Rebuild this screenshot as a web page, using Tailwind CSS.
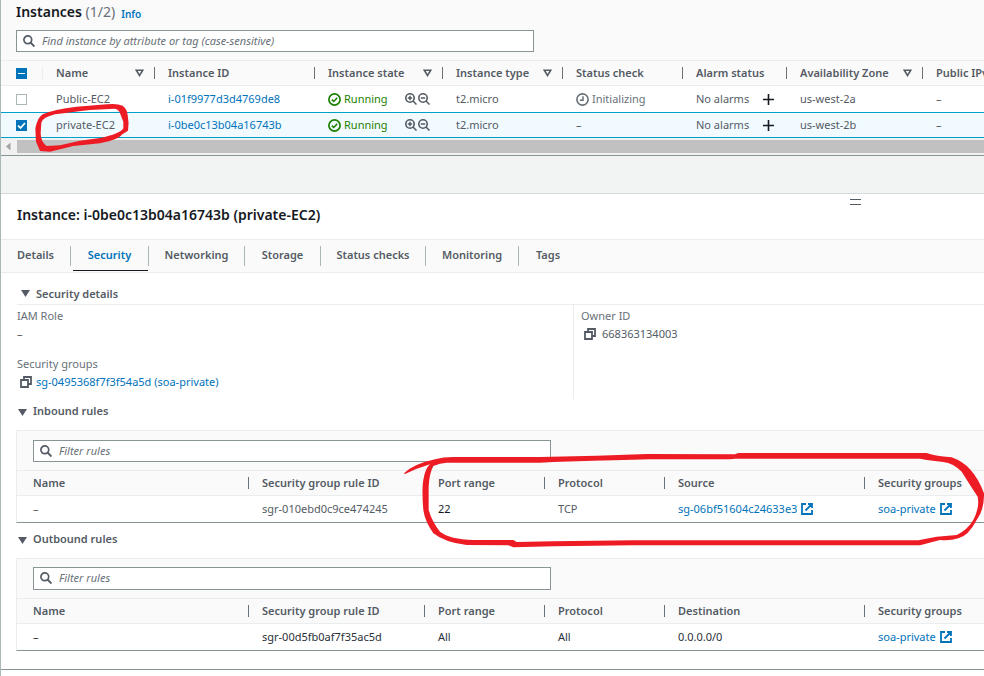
<!DOCTYPE html>
<html lang="en">
<head>
<meta charset="utf-8">
<title>Instances | EC2</title>
<script src="https://cdn.jsdelivr.net/npm/@tailwindcss/browser@4"></script>
</head>
<body class="bg-white font-['Noto_Sans',sans-serif] text-[11px] leading-4 text-[#545b64]">
<svg class="hidden" aria-hidden="true">
  <symbol id="search" viewBox="0 0 12 12"><circle cx="4.8" cy="4.8" r="3.9" fill="none" stroke="currentColor" stroke-width="1.7"/><path d="M7.5 7.5 11.5 11.5" stroke="currentColor" stroke-width="1.9"/></symbol>
  <symbol id="sort" viewBox="0 0 9 8"><path d="M1.2 1.2h6.6L4.5 6.4z" fill="none" stroke="currentColor" stroke-width="1.6"/></symbol>
  <symbol id="caret" viewBox="0 0 9 7"><path d="M0 0h9L4.5 7z" fill="currentColor"/></symbol>
  <symbol id="ok" viewBox="0 0 13 13"><circle cx="6.5" cy="6.5" r="5.6" fill="none" stroke="currentColor" stroke-width="1.7"/><path d="M3.8 6.7 5.8 8.5 9.2 4.8" fill="none" stroke="currentColor" stroke-width="1.6"/></symbol>
  <symbol id="clock" viewBox="0 0 13 13"><circle cx="6.5" cy="6.5" r="5.6" fill="none" stroke="currentColor" stroke-width="1.6"/><path d="M7 3.2V7.2H3.8" fill="none" stroke="currentColor" stroke-width="1.5"/></symbol>
  <symbol id="zoomin" viewBox="0 0 12 12"><circle cx="5" cy="5" r="4.2" fill="none" stroke="currentColor" stroke-width="1.6"/><path d="M8 8 11.5 11.5M2.8 5h4.4M5 2.8v4.4" fill="none" stroke="currentColor" stroke-width="1.5"/></symbol>
  <symbol id="zoomout" viewBox="0 0 12 12"><circle cx="5" cy="5" r="4.2" fill="none" stroke="currentColor" stroke-width="1.6"/><path d="M8 8 11.5 11.5M2.8 5h4.4" fill="none" stroke="currentColor" stroke-width="1.5"/></symbol>
  <symbol id="plus" viewBox="0 0 11 11"><path d="M5.5 0v11M0 5.5h11" stroke="currentColor" stroke-width="1.6"/></symbol>
  <symbol id="copy" viewBox="0 0 12 12"><path d="M1 4h7v7H1zM4 3.5V1h7v7H8.5" fill="none" stroke="currentColor" stroke-width="1.8"/></symbol>
  <symbol id="ext" viewBox="0 0 12 12"><path d="M5 1H1v10h10V7M7 1h4v4M11 1 4.5 7.5" fill="none" stroke="currentColor" stroke-width="1.8"/></symbol>
</svg>

<div class="relative min-h-screen overflow-hidden border-l border-[#aab7b8]">
  <section>
    <div class="bg-[#fafafa] px-[15px] pt-1 pb-2">
      <div class="flex h-[26px] items-start gap-[6px]">
        <h1 class="text-[14px] font-semibold text-[#16191f]">Instances <span class="font-normal text-[#687078]">(1/2)</span></h1>
        <a href="#" class="pt-[2px] text-[10px] font-semibold text-[#0073bb]">Info</a>
      </div>
      <label class="flex h-[22px] max-w-[518px] items-center gap-[7px] border border-[#879596] bg-white px-[6px]">
        <svg class="size-3 shrink-0"><use href="#search"/></svg>
        <input type="text" aria-label="Find instance" placeholder="Find instance by attribute or tag (case-sensitive)" class="w-full italic outline-none placeholder:text-[#687078]">
      </label>
    </div>
    <table class="w-full table-fixed border-t border-[#eaeded] text-left whitespace-nowrap">
      <colgroup><col class="w-[41px]"><col class="w-[113px]"><col class="w-[160px]"><col class="w-[128px]"><col class="w-[120px]"><col class="w-[120px]"><col class="w-[104px]"><col class="w-[136px]"><col></colgroup>
      <thead class="bg-[#fafafa] [&_th]:font-semibold">
        <tr class="h-[25px] border-b border-[#eaeded]">
          <th class="pl-[15px]"><span class="relative block size-[11px]"><input type="checkbox" aria-label="Select all instances" class="block size-[11px] appearance-none bg-[#0073bb]"><span class="pointer-events-none absolute top-[5px] left-[2px] h-px w-[7px] bg-white"></span></span></th>
          <th><div class="flex h-3 items-center justify-between border-x border-l-[#eaeded] border-r-[#687078] pr-[10px] pl-[13px]">Name<svg class="h-2 w-[9px]"><use href="#sort"/></svg></div></th>
          <th><div class="flex h-3 items-center border-r border-[#687078] pl-[13px]">Instance ID</div></th>
          <th><div class="flex h-3 items-center justify-between border-r border-[#687078] pr-[10px] pl-[13px]">Instance state<svg class="h-2 w-[9px]"><use href="#sort"/></svg></div></th>
          <th><div class="flex h-3 items-center justify-between border-r border-[#687078] pr-[10px] pl-[13px]">Instance type<svg class="h-2 w-[9px]"><use href="#sort"/></svg></div></th>
          <th><div class="flex h-3 items-center border-r border-[#687078] pl-[13px]">Status check</div></th>
          <th><div class="flex h-3 items-center border-r border-[#687078] pl-[13px]">Alarm status</div></th>
          <th><div class="flex h-3 items-center justify-between border-r border-[#687078] pr-[10px] pl-[13px]">Availability Zone<svg class="h-2 w-[9px]"><use href="#sort"/></svg></div></th>
          <th class="overflow-hidden pl-[13px]">Public IPv4</th>
        </tr>
      </thead>
      <tbody>
        <tr class="h-[27px]">
          <td class="pl-[15px]"><input type="checkbox" aria-label="Select Public-EC2" class="block size-[11px] appearance-none border border-[#aab7b8] bg-white"></td>
          <td class="pl-[14px]">Public-EC2</td>
          <td class="pl-[13px]"><a href="#" class="text-[#0073bb]">i-01f9977d3d4769de8</a></td>
          <td class="pr-[13px] pl-[13px]"><div class="flex items-center justify-between"><span class="flex items-center gap-[3px] text-[#1d8102]"><svg class="size-[13px]"><use href="#ok"/></svg>Running</span><span class="flex gap-px"><button aria-label="Include filter"><svg class="size-3"><use href="#zoomin"/></svg></button><button aria-label="Exclude filter"><svg class="size-3"><use href="#zoomout"/></svg></button></span></div></td>
          <td class="pl-[13px]">t2.micro</td>
          <td class="pl-[13px]"><span class="flex items-center gap-[3px] text-[#687078]"><svg class="size-[13px]"><use href="#clock"/></svg>Initializing</span></td>
          <td class="pr-[13px] pl-[13px]"><div class="flex items-center justify-between">No alarms<button aria-label="Add alarm" class="text-[#16191f]"><svg class="size-[11px]"><use href="#plus"/></svg></button></div></td>
          <td class="pl-[13px]">us-west-2a</td>
          <td class="pl-[13px]">–</td>
        </tr>
        <tr class="h-[25px] bg-[#f1faff] [&>td]:border-y [&>td]:border-[#00a1c9]">
          <td class="pl-[15px]"><span class="relative block size-[11px]"><input type="checkbox" checked aria-label="Select private-EC2" class="block size-[11px] appearance-none bg-[#0073bb]"><svg viewBox="0 0 11 11" class="pointer-events-none absolute inset-0 size-[11px]"><path d="M2 5.6 4.5 8 9 3" fill="none" stroke="#fff" stroke-width="1.8"/></svg></span></td>
          <td class="pl-[14px]">private-EC2</td>
          <td class="pl-[13px]"><a href="#" class="text-[#0073bb]">i-0be0c13b04a16743b</a></td>
          <td class="pr-[13px] pl-[13px]"><div class="flex items-center justify-between"><span class="flex items-center gap-[3px] text-[#1d8102]"><svg class="size-[13px]"><use href="#ok"/></svg>Running</span><span class="flex gap-px"><button aria-label="Include filter"><svg class="size-3"><use href="#zoomin"/></svg></button><button aria-label="Exclude filter"><svg class="size-3"><use href="#zoomout"/></svg></button></span></div></td>
          <td class="pl-[13px]">t2.micro</td>
          <td class="pl-[13px]">–</td>
          <td class="pr-[13px] pl-[13px]"><div class="flex items-center justify-between">No alarms<button aria-label="Add alarm" class="text-[#16191f]"><svg class="size-[11px]"><use href="#plus"/></svg></button></div></td>
          <td class="pl-[13px]">us-west-2b</td>
          <td class="pl-[13px]">–</td>
        </tr>
      </tbody>
    </table>
    <div class="flex h-[18px] items-center border-b border-[#879596] bg-[#f1f1f1]">
      <svg viewBox="0 0 16 13" class="h-[13px] w-4"><path d="M9.5 2.5v8L5 6.5z" fill="#a3a3a3"/></svg>
      <div class="h-[13px] flex-1 bg-[#c1c1c1]"></div>
    </div>
  </section>

  <div class="h-[38px] border-b border-[#d5dbdb] bg-[#f2f3f3]"></div>

  <section>
    <div class="relative flex h-[45px] items-center pb-1 pl-4">
      <h2 class="text-[14px] font-semibold text-[#16191f]">Instance: i-0be0c13b04a16743b (private-EC2)</h2>
      <button aria-label="Resize panel" class="absolute top-[5px] right-[123px] block h-[6px] w-[11px] border-y border-[#545b64]"></button>
    </div>
    <div role="tablist" class="flex h-[34px] items-stretch border-y border-[#eaeded] bg-[#fafafa] font-semibold [&_button]:pb-[2px]">
      <button role="tab" class="my-[6px] w-[70px] border-r border-[#aab7b8]">Details</button>
      <div class="relative flex w-[78px] items-center"><button role="tab" aria-selected="true" class="h-5 w-full border-r border-[#aab7b8] text-[#0073bb]">Security</button><span class="absolute bottom-px left-[2px] h-px w-[75px] bg-[#16191f]"></span></div>
      <button role="tab" class="my-[6px] w-24 border-r border-[#aab7b8]">Networking</button>
      <button role="tab" class="my-[6px] w-[76px] border-r border-[#aab7b8]">Storage</button>
      <button role="tab" class="my-[6px] w-[105px] border-r border-[#aab7b8]">Status checks</button>
      <button role="tab" class="my-[6px] w-[93px] border-r border-[#aab7b8]">Monitoring</button>
      <button role="tab" class="my-[6px] w-[58px]">Tags</button>
    </div>

    <div class="pl-4">
      <button class="flex h-8 w-full items-center gap-[6px] border-b border-[#eaeded] pt-[10px] pl-1 font-semibold"><svg class="h-[7px] w-[9px]"><use href="#caret"/></svg>Security details</button>
      <div class="grid grid-cols-[556px_1fr]">
        <dl class="pt-[3px]">
          <dt class="text-[#687078]">IAM Role</dt>
          <dd class="mt-[2px]">–</dd>
          <dt class="mt-[14px] text-[#687078]">Security groups</dt>
          <dd class="mt-[2px] flex items-center gap-1 pl-[3px]"><svg class="size-3"><use href="#copy"/></svg><a href="#" class="text-[#0073bb]">sg-0495368f7f3f54a5d (soa-private)</a></dd>
        </dl>
        <dl class="h-[94px] border-l border-[#eaeded] pt-[3px] pl-[7px]">
          <dt class="text-[#687078]">Owner ID</dt>
          <dd class="mt-[2px] flex items-center gap-[6px] pl-[3px]"><svg class="size-3"><use href="#copy"/></svg>668363134003</dd>
        </dl>
      </div>
    </div>

    <div class="pl-[15px]">
      <button class="flex h-[31px] items-start gap-[6px] pt-1 pl-[2px] font-semibold"><svg class="mt-[6px] h-[7px] w-[9px]"><use href="#caret"/></svg>Inbound rules</button>
      <div class="border-t border-b border-l border-[#eaeded] border-b-[#879596]">
        <div class="bg-[#fafafa] pt-[9px] pb-2 pl-4">
          <label class="flex h-[22px] max-w-[518px] items-center gap-[7px] border border-[#879596] bg-white px-[6px]">
            <svg class="size-3 shrink-0"><use href="#search"/></svg>
            <input type="text" aria-label="Filter inbound rules" placeholder="Filter rules" class="w-full italic outline-none placeholder:text-[#687078]">
          </label>
        </div>
        <table class="w-full table-fixed border-t border-[#eaeded] text-left whitespace-nowrap">
          <colgroup><col class="w-[232px]"><col class="w-[176px]"><col class="w-[120px]"><col class="w-[120px]"><col class="w-[200px]"><col></colgroup>
          <thead class="bg-[#fafafa] [&_th]:font-semibold">
            <tr class="h-[25px] border-b border-[#eaeded]">
              <th><div class="flex h-3 items-center border-r border-[#687078] pl-4">Name</div></th>
              <th><div class="flex h-3 items-center border-r border-[#687078] pl-[13px]">Security group rule ID</div></th>
              <th><div class="flex h-3 items-center border-r border-[#687078] pl-[13px]">Port range</div></th>
              <th><div class="flex h-3 items-center border-r border-[#687078] pl-[13px]">Protocol</div></th>
              <th><div class="flex h-3 items-center border-r border-[#687078] pl-[13px]">Source</div></th>
              <th class="pl-[13px]">Security groups</th>
            </tr>
          </thead>
          <tbody>
            <tr class="h-[26px]">
              <td class="pl-4">–</td>
              <td class="pl-[13px]">sgr-010ebd0c9ce474245</td>
              <td class="pl-[13px] text-[#16191f]">22</td>
              <td class="pl-[13px]">TCP</td>
              <td class="pl-[13px]"><a href="#" class="flex items-center gap-1 text-[#0073bb]">sg-06bf51604c24633e3<svg class="size-3"><use href="#ext"/></svg></a></td>
              <td class="pl-[13px]"><a href="#" class="flex items-center gap-1 text-[#0073bb]">soa-private<svg class="size-3"><use href="#ext"/></svg></a></td>
            </tr>
          </tbody>
        </table>
      </div>
      <button class="flex h-[35px] items-start gap-[6px] pt-2 pl-[2px] font-semibold"><svg class="mt-[6px] h-[7px] w-[9px]"><use href="#caret"/></svg>Outbound rules</button>
      <div class="border-t border-b border-l border-[#eaeded] border-b-[#879596]">
        <div class="bg-[#fafafa] py-2 pl-4">
          <label class="flex h-[23px] max-w-[518px] items-center gap-[7px] border border-[#879596] bg-white px-[6px]">
            <svg class="size-3 shrink-0"><use href="#search"/></svg>
            <input type="text" aria-label="Filter outbound rules" placeholder="Filter rules" class="w-full italic outline-none placeholder:text-[#687078]">
          </label>
        </div>
        <table class="w-full table-fixed border-t border-[#eaeded] text-left whitespace-nowrap">
          <colgroup><col class="w-[232px]"><col class="w-[176px]"><col class="w-[120px]"><col class="w-[120px]"><col class="w-[200px]"><col></colgroup>
          <thead class="bg-[#fafafa] [&_th]:font-semibold">
            <tr class="h-[25px] border-b border-[#eaeded]">
              <th><div class="flex h-3 items-center border-r border-[#687078] pl-4">Name</div></th>
              <th><div class="flex h-3 items-center border-r border-[#687078] pl-[13px]">Security group rule ID</div></th>
              <th><div class="flex h-3 items-center border-r border-[#687078] pl-[13px]">Port range</div></th>
              <th><div class="flex h-3 items-center border-r border-[#687078] pl-[13px]">Protocol</div></th>
              <th><div class="flex h-3 items-center border-r border-[#687078] pl-[13px]">Destination</div></th>
              <th class="pl-[13px]">Security groups</th>
            </tr>
          </thead>
          <tbody class="text-[#2b3038]">
            <tr class="h-[27px]">
              <td class="pl-4">–</td>
              <td class="pl-[13px]">sgr-00d5fb0af7f35ac5d</td>
              <td class="pl-[13px]">All</td>
              <td class="pl-[13px]">All</td>
              <td class="pl-[13px]">0.0.0.0/0</td>
              <td class="pl-[13px]"><a href="#" class="flex items-center gap-1 text-[#0073bb]">soa-private<svg class="size-3"><use href="#ext"/></svg></a></td>
            </tr>
          </tbody>
        </table>
      </div>
    </div>
    <div class="h-[19px] border-b border-[#879596]"></div>
  </section>

  <svg viewBox="3 0 2952 2028" class="pointer-events-none absolute top-0 left-0 h-[676px] w-[984px]" fill="#ed1c24" fill-rule="evenodd" aria-hidden="true">
    <path d="M110 370Q116 350 130 342Q160 328 230 320L320 313Q350 309 368 317Q382 328 383 345Q388 370 384 392L368 402Q355 420 300 430L220 438L150 455L120 453L108 425L106 385zM124 368Q128 352 165 343Q200 338 270 330L345 326Q358 328 362 345L370 365V385Q360 402 300 414L240 422L180 436L140 438Q122 425 122 400z"/>
    <path d="M1212 1420Q1240 1392 1305 1378Q1330 1371 1360 1371H1620L1790 1367L1940 1362L2205 1363L2215 1359H2780Q2800 1367 2855 1372Q2890 1385 2910 1408Q2935 1435 2952 1480Q2953 1530 2930 1560Q2905 1608 2875 1615Q2850 1623 2820 1620L2760 1636H1900L1660 1639L1540 1642L1525 1636L1400 1635Q1335 1628 1300 1600Q1275 1565 1270 1530Q1264 1460 1272 1430Q1277 1405 1290 1393Q1250 1405 1215 1422zM1300 1398Q1288 1420 1286 1460V1530Q1296 1565 1320 1595Q1350 1618 1420 1620H1540L1550 1626L1660 1624L1900 1621H2755L2810 1610L2870 1605Q2900 1592 2920 1560Q2940 1520 2933 1490Q2910 1455 2885 1415Q2860 1390 2830 1386L2780 1380L2760 1376H2205L2190 1378H1950L1870 1380L1780 1382L1660 1386L1620 1388H1340Q1320 1389 1300 1398z"/>
  </svg>
</div>
</body>
</html>
